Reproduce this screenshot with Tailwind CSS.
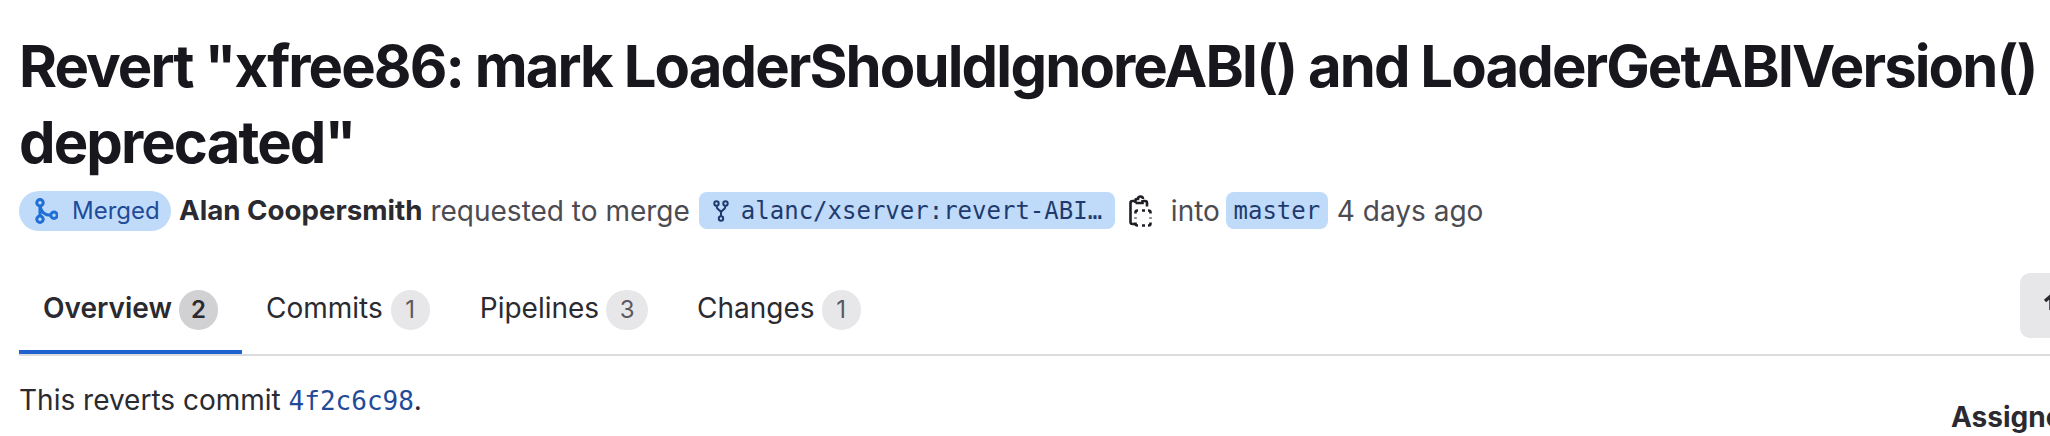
<!DOCTYPE html>
<html lang="en">
<head>
    <meta charset="UTF-8">
    <title>Revert "xfree86: mark LoaderShouldIgnoreABI() and LoaderGetABIVersion() deprecated"</title>
    <script src="https://cdn.jsdelivr.net/npm/@tailwindcss/browser@4"></script>
</head>
<body class="bg-white text-[#1f1e24] font-['Inter',sans-serif] w-[2050px] h-[436px] overflow-hidden">
    <div class="pl-[19px] w-[2050px]">
        <!-- Title -->
        <h1 class="pt-[28px] w-[2031px] text-[58px] leading-[76px] font-bold tracking-[-0.033em] text-[#18171d]">Revert "xfree86: mark LoaderShouldIgnoreABI() and LoaderGetABIVersion() deprecated"</h1>

        <!-- Meta row -->
        <div class="mt-[10px] h-[41px] flex items-center text-[28px] text-[#4c4b51] whitespace-nowrap">
            <span class="h-[40px] w-[152px] rounded-full bg-[#bfdbf9] text-[#1f4b99] flex items-center pl-[16px] gap-[14px] text-[24px]">
                <svg class="w-[23px] h-[26px] shrink-0" viewBox="0 0 23 26" fill="none" stroke="#1f6fd6" stroke-width="3">
                    <circle cx="5" cy="4.700" r="3.200"/><circle cx="5" cy="21.300" r="3.200"/><circle cx="19" cy="17.300" r="3.200"/>
                    <path d="M5 8v10M5 8c1 6 5 9.300 11 9.300"/>
                </svg>
                Merged
            </span>
            <b class="ml-[8px] font-bold text-[27.700px] text-[#2b2a30]">Alan Coopersmith</b>
            <span class="ml-[8px]">requested to merge</span>
            <span class="ml-[9px] h-[37px] w-[416px] rounded-[8px] bg-[#bfdbf9] text-[#1f3a6e] flex items-center pl-[14px] gap-[12px] text-[24px] font-['DejaVu_Sans_Mono',monospace]">
                <svg class="w-[16px] h-[22px] shrink-0" viewBox="0 0 16 22" fill="none" stroke="#1f3a6e" stroke-width="2">
                    <circle cx="3.500" cy="3.500" r="2.200"/><circle cx="12.500" cy="3.500" r="2.200"/><circle cx="8" cy="18.500" r="2.200"/>
                    <path d="M3.500 6c0 4 4.500 4 4.500 6.500v3.500M12.500 6c0 4-4.500 4-4.500 6.500"/>
                </svg>
                alanc/xserver:revert-ABI…
            </span>
            <svg class="ml-[14px] w-[23px] h-[32px] shrink-0" viewBox="0 0 23 32" fill="none" stroke="#1f1e24" stroke-width="2.600">
                <path d="M6 6H3.500a2 2 0 0 0-2 2v19a2 2 0 0 0 2 2H6M6.500 8V5a1 1 0 0 1 1-1h1.500a2.500 2.500 0 0 1 5 0M14 6h2a2 2 0 0 1 2 2v3.500M6.500 8h7V5"/>
                <path d="M9 15.500h-.500a2 2 0 0 0-2 2v1M13 15.500h3M19 15.500h.500a2 2 0 0 1 2 2v1M21.500 22.500v1M21.500 27.500v1a2 2 0 0 1-2 2H19M16 30.500h-3M9 30.500h-.500a2 2 0 0 1-2-2v-1M6.500 23.500v-1"/>
            </svg>
            <span class="ml-[19px]">into</span>
            <span class="ml-[6px] h-[37px] w-[102px] rounded-[8px] bg-[#bfdbf9] text-[#1f3a6e] flex items-center justify-center text-[24px] font-['DejaVu_Sans_Mono',monospace]">master</span>
            <span class="ml-[9px]">4 days ago</span>
        </div>

        <!-- Tabs -->
        <div class="mt-[41px] h-[84px] flex border-b-2 border-[#dcdcde] relative text-[28px] text-[#2b2a30]">
            <div class="w-[223px] h-[82px] border-b-[4px] border-[#1f63d1] flex items-start pt-[18px] pl-[24px] gap-[7px] font-semibold">
                <span class="leading-[36px]">Overview</span> <span class="w-[39px] h-[40px] rounded-full bg-[#d1d0d3] text-[#2b2a30] flex items-center justify-center text-[24px]">2</span>
            </div>
            <div class="flex items-start pt-[18px] pl-[24px] pr-[26px] gap-[8px]">
                <span class="leading-[36px]">Commits</span> <span class="w-[39px] h-[40px] rounded-full bg-[#e7e7ea] text-[#5a595f] flex items-center justify-center text-[24px]">1</span>
            </div>
            <div class="flex items-start pt-[18px] pl-[24px] pr-[25px] gap-[7px]">
                <span class="leading-[36px]">Pipelines</span> <span class="w-[42px] h-[40px] rounded-full bg-[#e7e7ea] text-[#5a595f] flex items-center justify-center text-[24px]">3</span>
            </div>
            <div class="flex items-start pt-[18px] pl-[24px] gap-[7px]">
                <span class="leading-[36px]">Changes</span> <span class="w-[39px] h-[40px] rounded-full bg-[#e7e7ea] text-[#5a595f] flex items-center justify-center text-[24px]">1</span>
            </div>
            <!-- button cut off by the right edge -->
            <div class="absolute left-[2001px] top-[1px] w-[60px] h-[65px] rounded-[10px] bg-[#e7e7ea] overflow-hidden">
                <svg class="absolute left-[22px] top-[21px] w-[12px] h-[16px]" viewBox="0 0 12 16" fill="none" stroke="#2b2a30" stroke-width="3.500"><path d="M3 7l6-5v14"/></svg>
            </div>
        </div>

        <!-- Body + sidebar -->
        <div class="flex justify-between pt-[23px] text-[28px] text-[#2b2a30]">
            <p>This reverts commit <a class="text-[#1f4b99] font-['DejaVu_Sans_Mono',monospace] text-[26px]">4f2c6c98</a>.</p>
            <div class="w-[99px] mt-[17px] font-bold whitespace-nowrap">Assignee</div>
        </div>
    </div>
</body>
</html>
